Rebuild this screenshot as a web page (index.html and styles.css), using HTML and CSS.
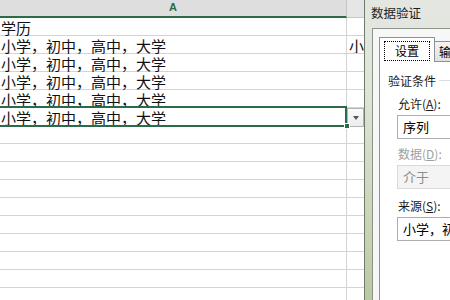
FILE: index.html
```html
<!DOCTYPE html>
<html>
<head>
<meta charset="utf-8">
<link rel="stylesheet" href="styles.css">
</head>
<body>
<div class="sheet">
  <div class="hdr">
    <div class="hcell colA">A</div>
    <div class="hcell colB"></div>
  </div>
  <div class="row"><div class="cell a">学历</div><div class="cell b"></div></div>
  <div class="row"><div class="cell a">小学，初中，高中，大学</div><div class="cell b"><span class="clip">小学</span></div></div>
  <div class="row"><div class="cell a">小学，初中，高中，大学</div><div class="cell b"></div></div>
  <div class="row"><div class="cell a">小学，初中，高中，大学</div><div class="cell b"></div></div>
  <div class="row"><div class="cell a">小学，初中，高中，大学</div><div class="cell b"></div></div>
  <div class="row"><div class="cell a active">小学，初中，高中，大学<span class="handle"></span></div><div class="cell b"><span class="dd"><span class="tri"></span></span></div></div>
  <div class="row"><div class="cell a"></div><div class="cell b"></div></div>
  <div class="row"><div class="cell a"></div><div class="cell b"></div></div>
  <div class="row"><div class="cell a"></div><div class="cell b"></div></div>
  <div class="row"><div class="cell a"></div><div class="cell b"></div></div>
  <div class="row"><div class="cell a"></div><div class="cell b"></div></div>
  <div class="row"><div class="cell a"></div><div class="cell b"></div></div>
  <div class="row"><div class="cell a"></div><div class="cell b"></div></div>
  <div class="row"><div class="cell a"></div><div class="cell b"></div></div>
  <div class="row"><div class="cell a"></div><div class="cell b"></div></div>
  <div class="row"><div class="cell a"></div><div class="cell b"></div></div>
</div>
<div class="dialog">
  <div class="title">数据验证</div>
  <div class="client">
    <div class="tabs">
      <div class="tab sel"><span class="focus">设置</span></div>
      <div class="tab">输入信息</div>
    </div>
    <div class="panel">
      <div class="group"><span>验证条件</span><i class="gline"></i></div>
      <div class="lbl">允许(<u>A</u>):</div>
      <div class="box">序列</div>
      <div class="lbl dis">数据(<u>D</u>):</div>
      <div class="box disbox">介于</div>
      <div class="lbl">来源(<u>S</u>):</div>
      <div class="box src">小学，初中，高中，大学</div>
      <div class="chkrow"><span class="chk"></span>对有同样设置的所有其他单元格应用这些更改</div>
    </div>
  </div>
</div>
</body>
</html>
```

FILE: styles.css
```css
html, body {
  margin: 0;
  padding: 0;
}
body {
  width: 450px;
  height: 300px;
  overflow: hidden;
  display: flex;
  background: #fff;
  font-family: "Noto Sans CJK SC", "Liberation Sans", sans-serif;
  color: #000;
}
.sheet {
  width: 364px;
  flex: none;
  overflow: hidden;
  display: flex;
  flex-direction: column;
}
.hdr {
  display: flex;
  height: 18px;
  flex: none;
}
.hcell {
  background: #dedede;
  box-sizing: border-box;
}
.colA {
  width: 347px;
  border-bottom: 2px solid #2b6b47;
  border-right: 1px solid #c6c6c6;
  color: #2b6b47;
  font-family: "Liberation Sans", sans-serif;
  font-weight: bold;
  font-size: 11px;
  line-height: 15px;
  text-align: center;
}
.colB {
  flex: 1;
  background: #e6e6e6;
  border-bottom: 1px solid #c6c6c6;
}
.row {
  display: flex;
  height: 18px;
  flex: none;
}
.cell {
  box-sizing: border-box;
  border-bottom: 1px solid #d4d4d4;
  font-size: 15px;
  line-height: 19px;
  white-space: nowrap;
  color: #111;
}
.a {
  width: 347px;
  border-right: 1px solid #d4d4d4;
  padding-left: 1px;
  position: relative;
}
.b {
  flex: 1;
  padding-left: 2px;
  position: relative;
  min-width: 0;
}
.clip {
  display: block;
  width: 15px;
  overflow: hidden;
  height: 17px;
}
.active::before {
  content: "";
  position: absolute;
  left: -3px;
  right: -1px;
  top: -2px;
  bottom: -2px;
  border: 2px solid #2b6b47;
  border-left: none;
}
.handle {
  position: absolute;
  right: -4px;
  bottom: -4px;
  width: 4px;
  height: 4px;
  background: #2b6b47;
  border: 1px solid #fff;
  z-index: 2;
}
.dd {
  position: absolute;
  left: 0;
  top: 0;
  width: 17px;
  height: 19px;
  box-sizing: border-box;
  border: 1px solid #b4b4b4;
  background: linear-gradient(#fbfbfb, #ececec);
  display: flex;
  align-items: center;
  justify-content: center;
}
.tri {
  width: 0;
  height: 0;
  border-left: 3.5px solid transparent;
  border-right: 3.5px solid transparent;
  border-top: 4px solid #555;
}
.dialog {
  flex: 1;
  border-left: 1px solid #6f7a6a;
  background: linear-gradient(#e4e7e1 0%, #dfe4d8 30%, #c6d2b2 80%, #b9c9a0 100%);
  display: flex;
  flex-direction: column;
  padding-left: 7px;
  min-width: 0;
}
.title {
  height: 28px;
  flex: none;
  font-size: 12.5px;
  line-height: 26px;
  color: #1e1e1e;
  white-space: nowrap;
  margin-left: -1px;
}
.client {
  flex: 1;
  background: #f7f7f7;
  border-left: 1px solid #8c9488;
  border-top: 1px solid #8c9488;
  padding: 8px 0 0 6px;
  display: flex;
  flex-direction: column;
  min-width: 0;
}
.tabs {
  display: flex;
  align-items: flex-end;
  height: 24px;
  flex: none;
  font-size: 12px;
  white-space: nowrap;
}
.tab {
  flex: none;
  height: 20px;
  box-sizing: border-box;
  border: 1px solid #8e9199;
  border-bottom: none;
  background: linear-gradient(#f4f4f4, #e1e1e1);
  padding: 0 4px;
  line-height: 19px;
  margin-left: -1px;
}
.tab.sel {
  height: 25px;
  width: 56px;
  background: #fff;
  margin-left: 0;
  padding: 3px 4px 0;
  position: relative;
  z-index: 1;
  margin-bottom: -1px;
}
.focus {
  display: block;
  border: 1px dotted #000;
  height: 18px;
  line-height: 17px;
  text-align: center;
}
.panel {
  flex: 1;
  background: #fff;
  border-left: 1px solid #8e9199;
  border-top: 1px solid #8e9199;
  padding: 11px 0 0 8px;
  font-size: 12px;
  white-space: nowrap;
  display: flex;
  flex-direction: column;
  min-width: 0;
}
.group {
  display: flex;
  align-items: center;
  height: 14px;
  color: #1a1a1a;
}
.gline {
  flex: 1;
  height: 1px;
  background: #d5dfe5;
  margin-left: 3px;
}
.lbl {
  margin: 10px 0 0 10px;
  height: 14px;
  line-height: 14px;
  color: #1a1a1a;
}
.lbl.dis {
  color: #a0a0a0;
  margin-top: 8px;
}
.box {
  margin: 4px 0 0 9px;
  height: 24px;
  box-sizing: border-box;
  border: 1px solid #abadb3;
  border-right: none;
  background: #fff;
  line-height: 22px;
  padding-left: 5px;
  font-size: 13px;
  overflow: hidden;
}
.disbox {
  background: #f4f4f4;
  border-color: #d9d9d9;
  color: #8d8d8d;
}
.src {
  margin-top: 4px;
}
.chkrow {
  margin: 58px 0 0 2px;
  display: flex;
  align-items: center;
  gap: 3px;
  font-size: 12px;
  line-height: 14px;
}
.chk {
  width: 11px;
  height: 11px;
  box-sizing: border-box;
  border: 1px solid #8f8f8f;
  background: linear-gradient(135deg, #dcdcdc, #fbfbfb);
  flex: none;
}
```
